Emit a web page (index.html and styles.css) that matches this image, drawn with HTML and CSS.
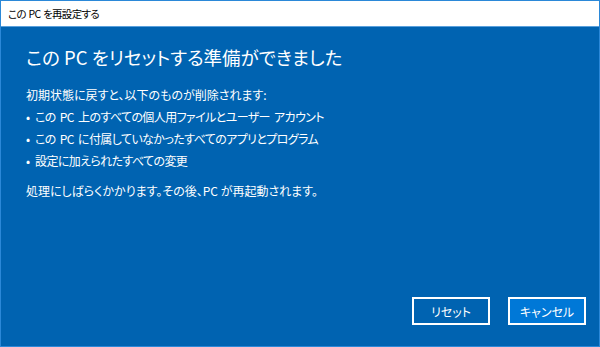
FILE: index.html
```html
<!DOCTYPE html>
<html lang="ja">
<head>
<meta charset="utf-8">
<link rel="stylesheet" href="styles.css">
</head>
<body>
<div class="window">
  <div class="titlebar">この PC を再設定する</div>
  <div class="content">
    <h1 class="heading">この PC をリセットする準備ができました</h1>
    <p class="text">初期状態に戻すと、以下のものが削除されます:</p>
    <ul class="list">
      <li>この PC 上のすべての個人用ファイルとユーザー アカウント</li>
      <li>この PC に付属していなかったすべてのアプリとプログラム</li>
      <li>設定に加えられたすべての変更</li>
    </ul>
    <p class="text note">処理にしばらくかかります。その後、PC が再起動されます。</p>
    <div class="buttons">
      <button class="btn">リセット</button>
      <button class="btn primary">キャンセル</button>
    </div>
  </div>
</div>
</body>
</html>
```
FILE: styles.css
```css
html, body {
  margin: 0;
  padding: 0;
  width: 600px;
  height: 347px;
  overflow: hidden;
}
body {
  font-family: "Noto Sans CJK JP", "Noto Sans", sans-serif;
  font-feature-settings: "palt";
}
.window {
  box-sizing: border-box;
  width: 600px;
  height: 347px;
  border: 1px solid #2b88d8;
  display: flex;
  flex-direction: column;
  background: #0063b1;
}
.titlebar {
  height: 25px;
  background: #ffffff;
  border-bottom: 1px solid #5aa0dc;
  color: #000;
  font-size: 10.5px;
  letter-spacing: -0.7px;
  word-spacing: 1px;
  line-height: 25px;
  padding-left: 7px;
  flex: none;
}
.content {
  flex: 1;
  display: flex;
  flex-direction: column;
  padding: 17px 13px 21px 25px;
  color: #ffffff;
}
.heading {
  margin: 0;
  font-weight: normal;
  font-size: 18.5px;
  line-height: 26px;
}
.text {
  margin: 14px 0 0;
  font-size: 12px;
  line-height: 22px;
}
.list {
  margin: 0;
  padding: 0;
  list-style: none;
  font-size: 12px;
  line-height: 22px;
  letter-spacing: -0.6px;
  word-spacing: 2px;
}
.list li::before {
  content: "•";
  display: inline-block;
  width: 9px;
  letter-spacing: 0;
}
.note {
  margin-top: 8px;
}
.buttons {
  margin-top: auto;
  display: flex;
  justify-content: flex-end;
  gap: 18px;
}
.btn {
  box-sizing: border-box;
  width: 78px;
  height: 28px;
  border: 2px solid #ffffff;
  background: transparent;
  color: #ffffff;
  font-family: inherit;
  font-feature-settings: "palt";
  font-size: 12px;
  padding: 0;
}
.btn.primary {
  background: #0078d7;
}
```
